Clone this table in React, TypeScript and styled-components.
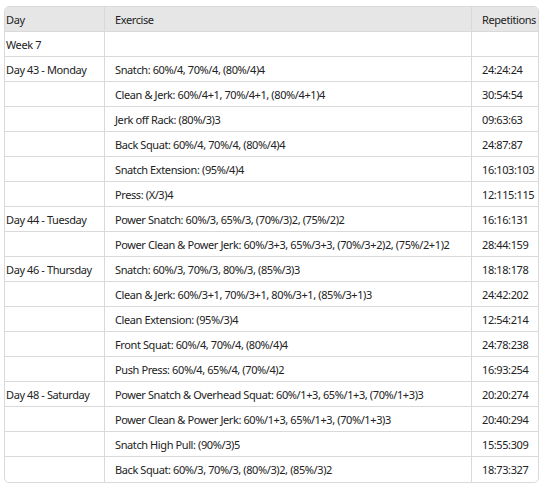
import React from "react";
import styled, { createGlobalStyle } from "styled-components";

const Global = createGlobalStyle`
  html, body { margin: 0; padding: 0; background: #ffffff; }
  body { font-family: "Noto Sans", "Open Sans", sans-serif; color: #222; }
`;

const Wrap = styled.div`
  padding: 6px 6px 0 4px;
`;

const Table = styled.table`
  width: 533px;
  border-collapse: separate;
  border-spacing: 0;
  border: 1px solid #d9d9d9;
  border-radius: 5px;
  overflow: hidden;
  table-layout: fixed;
  font-size: 11px;
  letter-spacing: -0.4px;
`;

const Th = styled.th<{ $w: number; $pl: number; $last?: boolean }>`
  width: ${(p) => p.$w}px;
  height: 25px;
  padding: 0 0 0 ${(p) => p.$pl}px;
  text-align: left;
  font-weight: 400;
  background: #e6e6e6;
  border-bottom: 1px solid #d9d9d9;
  border-right: ${(p) => (p.$last ? "none" : "1px solid #d9d9d9")};
  white-space: nowrap;
  box-sizing: border-box;
`;

const Td = styled.td<{ $pl: number; $last?: boolean; $lastRow?: boolean }>`
  height: 25px;
  padding: 0 0 0 ${(p) => p.$pl}px;
  border-bottom: ${(p) => (p.$lastRow ? "none" : "1px solid #d9d9d9")};
  border-right: ${(p) => (p.$last ? "none" : "1px solid #d9d9d9")};
  white-space: nowrap;
  overflow: hidden;
  box-sizing: border-box;
`;

const rows: [string, string, string][] = [
  ["Week 7", "", ""],
  ["Day 43 - Monday", "Snatch: 60%/4, 70%/4, (80%/4)4", "24:24:24"],
  ["", "Clean & Jerk: 60%/4+1, 70%/4+1, (80%/4+1)4", "30:54:54"],
  ["", "Jerk off Rack: (80%/3)3", "09:63:63"],
  ["", "Back Squat: 60%/4, 70%/4, (80%/4)4", "24:87:87"],
  ["", "Snatch Extension: (95%/4)4", "16:103:103"],
  ["", "Press: (X/3)4", "12:115:115"],
  ["Day 44 - Tuesday", "Power Snatch: 60%/3, 65%/3, (70%/3)2, (75%/2)2", "16:16:131"],
  ["", "Power Clean & Power Jerk: 60%/3+3, 65%/3+3, (70%/3+2)2, (75%/2+1)2", "28:44:159"],
  ["Day 46 - Thursday", "Snatch: 60%/3, 70%/3, 80%/3, (85%/3)3", "18:18:178"],
  ["", "Clean & Jerk: 60%/3+1, 70%/3+1, 80%/3+1, (85%/3+1)3", "24:42:202"],
  ["", "Clean Extension: (95%/3)4", "12:54:214"],
  ["", "Front Squat: 60%/4, 70%/4, (80%/4)4", "24:78:238"],
  ["", "Push Press: 60%/4, 65%/4, (70%/4)2", "16:93:254"],
  ["Day 48 - Saturday", "Power Snatch & Overhead Squat: 60%/1+3, 65%/1+3, (70%/1+3)3", "20:20:274"],
  ["", "Power Clean & Power Jerk: 60%/1+3, 65%/1+3, (70%/1+3)3", "20:40:294"],
  ["", "Snatch High Pull: (90%/3)5", "15:55:309"],
  ["", "Back Squat: 60%/3, 70%/3, (80%/3)2, (85%/3)2", "18:73:327"],
];

export default function App() {
  return (
    <Wrap>
      <Global />
      <Table>
        <thead>
          <tr>
            <Th $w={100} $pl={1}>Day</Th>
            <Th $w={367} $pl={10}>Exercise</Th>
            <Th $w={66} $pl={10} $last>Repetitions</Th>
          </tr>
        </thead>
        <tbody>
          {rows.map((r, i) => {
            const lastRow = i === rows.length - 1;
            return (
              <tr key={i}>
                <Td $pl={1} $lastRow={lastRow}>{r[0]}</Td>
                <Td $pl={10} $lastRow={lastRow}>{r[1]}</Td>
                <Td $pl={10} $last $lastRow={lastRow}>{r[2]}</Td>
              </tr>
            );
          })}
        </tbody>
      </Table>
    </Wrap>
  );
}
